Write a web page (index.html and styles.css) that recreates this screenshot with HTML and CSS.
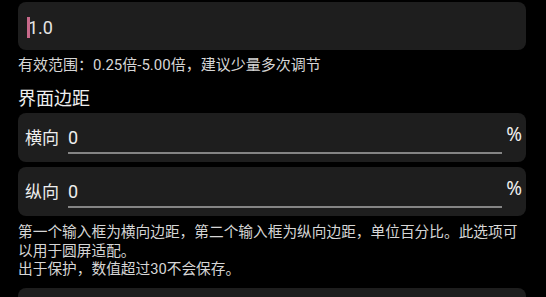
FILE: index.html
```html
<!DOCTYPE html>
<html lang="zh-CN">
<head>
    <meta charset="UTF-8">
    <meta name="viewport" content="width=device-width, initial-scale=1.0">
    <title>界面设置</title>

    <link rel="stylesheet" href="styles.css">
</head>
<body>

    <div class="settings">
        <div class="card scale-card">
            <span class="caret"></span><span class="scale-value">1.0</span>
        </div>
        <p class="hint">有效范围：0.25倍-5.00倍，建议少量多次调节</p>

        <h3 class="section-title">界面边距</h3>
        <div class="card field">
            <span class="field-label">横向</span>
            <div class="field-input"><span>0</span></div>
            <span class="field-unit">%</span>
        </div>
        <div class="card field">
            <span class="field-label">纵向</span>
            <div class="field-input"><span>0</span></div>
            <span class="field-unit">%</span>
        </div>
        <p class="desc">第一个输入框为横向边距，第二个输入框为纵向边距，单位百分比。此选项可以用于圆屏适配。<br>出于保护，数值超过30不会保存。</p>

        <div class="card next-card"></div>
    </div>

</body>
</html>
```

FILE: styles.css
```css
* {
    margin: 0;
    padding: 0;
    box-sizing: border-box;
}

body {
    background-color: #000;
    color: #e6e6e6;
    font-family: Roboto, "Noto Sans CJK SC", sans-serif;
    overflow: hidden;
}

.settings {
    padding: 2px 20px 0 18px;
}

.card {
    background-color: #1e1e1e;
    border-radius: 8px;
}

.scale-card {
    height: 48px;
    display: flex;
    align-items: center;
    padding-left: 9px;
    padding-top: 3px;
    font-size: 18px;
}

.caret {
    display: inline-block;
    width: 3px;
    height: 21px;
    background-color: #c8698a;
    margin-right: -2px;
    position: relative;
    z-index: 1;
}

.scale-value {
    color: #e4e4e4;
}

.hint {
    margin-top: 5px;
    font-size: 15px;
    line-height: 20px;
    color: #d6d6d6;
}

.section-title {
    margin-top: 12px;
    font-size: 18px;
    font-weight: normal;
    line-height: 24px;
    color: #eee;
}

.field {
    height: 49px;
    display: flex;
    align-items: flex-end;
    padding: 0 4px 8px 7px;
    font-size: 17px;
    margin-top: 2px;
}

.field + .field {
    margin-top: 5px;
}

.field-label {
    line-height: 28px;
    margin-bottom: 2px;
    width: 43px;
    color: #eee;
}

.field-input {
    flex: 1;
    font-size: 18px;
    line-height: 28px;
    border-bottom: 2px solid #858585;
    color: #eee;
}

.field-unit {
    margin-left: 4px;
    font-family: "Noto Sans", sans-serif;
    font-size: 19px;
    line-height: 28px;
    margin-bottom: 6px;
    color: #eee;
}

.desc {
    margin-top: 7px;
    font-size: 14.7px;
    line-height: 18.5px;
    color: #d6d6d6;
}

.next-card {
    margin-top: 9px;
    height: 30px;
}
```
